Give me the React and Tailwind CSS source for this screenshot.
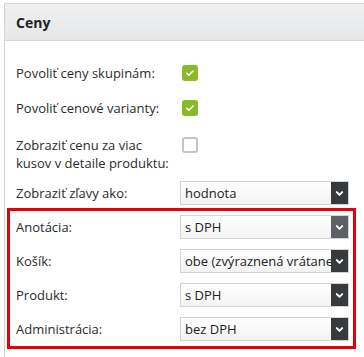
import React from 'react';

const font = { fontFamily: '"Open Sans", "Noto Sans", sans-serif' };

const Check = ({ checked }) =>
  checked ? (
    <span className="flex h-[16px] w-[16px] items-center justify-center rounded-[3px] bg-[#8bb928]">
      <svg viewBox="0 0 16 16" className="h-[10px] w-[10px]" fill="none" stroke="white" strokeWidth="2.6" strokeLinecap="round" strokeLinejoin="round">
        <path d="M3 8.5l3.2 3L13 4.8" />
      </svg>
    </span>
  ) : (
    <span className="block h-[16px] w-[16px] rounded-[3px] border-2 border-[#c4c4c4] bg-white" />
  );

const Select = ({ value, hover }) => (
  <div className="flex h-[24px] w-[169px] border border-[#d2d2d2] bg-gradient-to-b from-white to-[#f3f3f3]">
    <div className="flex-1 overflow-hidden whitespace-nowrap pl-[4px] text-[13px] leading-[22px] text-[#222]">{value}</div>
    <div className={`flex w-[17px] shrink-0 items-center justify-center ${hover ? 'bg-[#5d6064]' : 'bg-[#373a3d]'}`}>
      <svg viewBox="0 0 10 10" className="h-[9px] w-[9px]" fill="none" stroke="white" strokeWidth="2.2" strokeLinecap="round" strokeLinejoin="round">
        <path d="M2 3.5l3 3 3-3" />
      </svg>
    </div>
  </div>
);

const Row = ({ label, children, className = '' }) => (
  <div className={`flex items-center ${className}`}>
    <div className="w-[164px] shrink-0 text-[13px] leading-[18px] text-[#2b2b2b]">{label}</div>
    {children}
  </div>
);

export default function App() {
  return (
    <div className="h-[357px] w-[364px] overflow-hidden bg-white pl-[4px] pt-[3px]" style={font}>
      <div className="h-[400px] w-[400px] border-l border-t border-[#d3d3d3]">
        <div className="flex h-[37px] items-center border-b border-[#d6d8da] bg-gradient-to-b from-[#eff0f2] to-[#e5e7e9] pl-[11px] text-[14px] font-bold text-[#222]">
          Ceny
        </div>
        <div className="pt-[20px]">
          <Row label="Povoliť ceny skupinám:" className="h-[24px] pl-[11px]">
            <div className="pl-[2px]"><Check checked /></div>
          </Row>
          <Row label="Povoliť cenové varianty:" className="mt-[11px] h-[24px] pl-[11px]">
            <div className="pl-[2px]"><Check checked /></div>
          </Row>
          <div className="mt-[16px] flex items-start pl-[11px]">
            <div className="w-[164px] shrink-0 text-[13px] leading-[18px] text-[#2b2b2b]">
              Zobraziť cenu za viac
              <br />
              kusov v detaile produktu:
            </div>
            <div className="pl-[2px] pt-[1px]"><Check /></div>
          </div>
          <Row label="Zobraziť zľavy ako:" className="mt-[9px] pl-[11px]">
            <Select value="hodnota" />
          </Row>
          <div className="ml-[2px] mt-[3px] w-[349px] border-[3px] border-[#e6000a] pb-[5px] pl-[6px] pt-[4px]">
            <Row label="Anotácia:">
              <Select value="s DPH" hover />
            </Row>
            <Row label="Košík:" className="mt-[10px]">
              <Select value="obe (zvýraznená vrátane DPH)" />
            </Row>
            <Row label="Produkt:" className="mt-[10px]">
              <Select value="s DPH" />
            </Row>
            <Row label="Administrácia:" className="mt-[10px]">
              <Select value="bez DPH" />
            </Row>
          </div>
        </div>
      </div>
    </div>
  );
}
